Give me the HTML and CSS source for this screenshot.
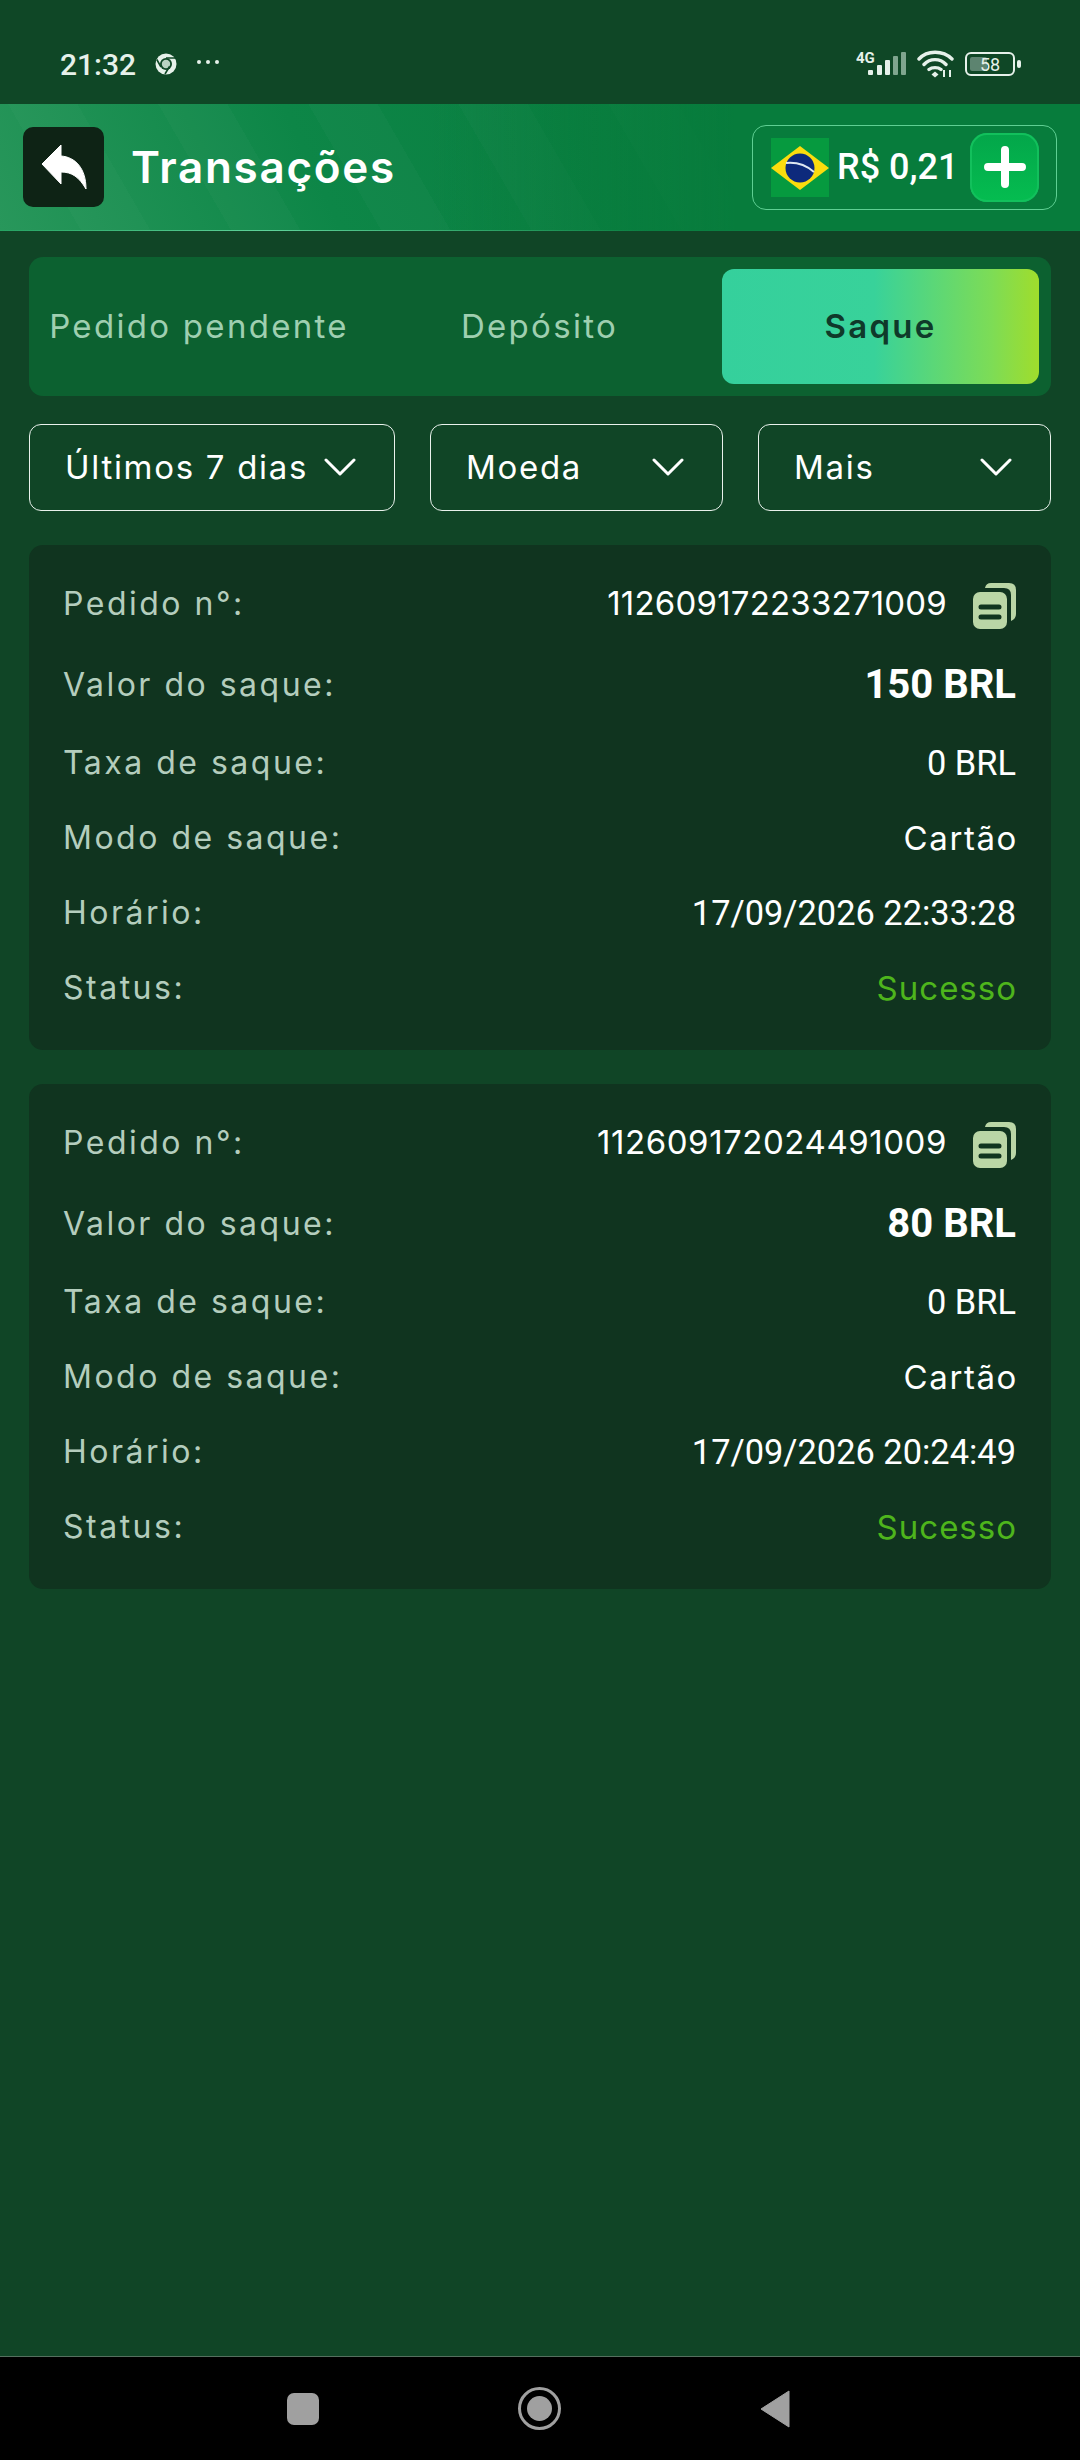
FILE: index.html
```html
<!DOCTYPE html>
<html lang="en">
<head>
    <meta charset="UTF-8">
    <meta name="viewport" content="width=device-width, initial-scale=1.0">
    <title>Transações</title>
    <link rel="stylesheet" href="styles.css">
</head>
<body>
    <div class="phone">
        <div class="statusbar">
            <div class="status-left">
                <span class="clock">21:32</span>
                <svg class="chrome" width="22" height="22" viewBox="0 0 22 22">
                    <circle cx="11" cy="11" r="10.500" fill="#e6f1ea"/>
                    <circle cx="11" cy="11" r="6" fill="#0f4726"/>
                    <circle cx="11" cy="11" r="4.200" fill="#b9d2c2"/>
                    <path d="M11 5h9M6 14L1.800 6.500M14.500 13.500L10 21" stroke="#0f4726" stroke-width="1.600" fill="none"/>
                </svg>
                <svg class="dots" width="24" height="6" viewBox="0 0 24 6">
                    <circle cx="3" cy="3" r="2" fill="#e6f1ea"/>
                    <circle cx="12" cy="3" r="2" fill="#e6f1ea"/>
                    <circle cx="21" cy="3" r="2" fill="#e6f1ea"/>
                </svg>
            </div>
            <div class="status-right">
                <svg width="50" height="28" viewBox="0 0 50 28">
                    <text x="0" y="13" class="net">4G</text>
                    <rect x="12" y="20" width="5" height="5" rx="1" fill="#e6f1ea"/>
                    <rect x="21" y="15" width="5" height="10" rx="1" fill="#e6f1ea"/>
                    <rect x="29" y="10" width="5" height="15" rx="1" fill="#e6f1ea"/>
                    <rect x="37" y="6" width="5" height="19" rx="1" fill="#7fa58e"/>
                    <rect x="45" y="2" width="5" height="23" rx="1" fill="#7fa58e"/>
                </svg>
                <svg class="wifi" width="37" height="28" viewBox="0 0 37 28">
                    <path d="M2 9C10 0 26 0 35 9M7 14.500C13 8 23 8 29 14.500M12 19.500C15 17 21 17 24 19.500" stroke="#e6f1ea" stroke-width="3.400" fill="none" stroke-linecap="round"/>
                    <path d="M18 21.500l3.500 3-3.500 3-3.500-3z" fill="#e6f1ea"/>
                    <path d="M27 20v7M33 20v7" stroke="#e6f1ea" stroke-width="2"/>
                </svg>
                <div class="battery">
                    <div class="battery-body"><span class="battery-fill"></span><span class="battery-num">58</span></div>
                    <span class="battery-tip"></span>
                </div>
            </div>
        </div>

        <div class="topbar">
            <div class="topbar-left">
                <div class="back-btn">
                    <svg width="46" height="46" viewBox="0 0 46 46">
                        <path d="M1 20L20 1V12C34 13 45 24 45 45C38 33 31 28 20 28V40Z" fill="#fff" stroke="#fff" stroke-linejoin="round"/>
                    </svg>
                </div>
                <span class="title">Transações</span>
            </div>
            <div class="balance">
                <svg class="flag" width="58" height="59" viewBox="0 0 58 59">
                    <rect width="58" height="59" fill="#069a3f"/>
                    <path d="M29 8L58 30L29 52L0 30Z" fill="#fbdc0e"/>
                    <circle cx="29" cy="30" r="14.500" fill="#0d2a7c"/>
                    <path d="M15 25C25 24 35 27 43 34" stroke="#dfe8f2" stroke-width="2" fill="none"/>
                </svg>
                <span class="amount">R$ 0,21</span>
                <div class="plus-btn">
                    <svg width="42" height="42" viewBox="0 0 42 42">
                        <path d="M21 4V38M4 21H38" stroke="#fff" stroke-width="8" stroke-linecap="round"/>
                    </svg>
                </div>
            </div>
        </div>

        <div class="content">
            <div class="tabs">
                <div class="tab tab-first">Pedido pendente</div>
                <div class="tab tab-mid">Depósito</div>
                <div class="tab active">Saque</div>
            </div>

            <div class="filters">
                <div class="filter filter-days"><span>Últimos 7 dias</span><svg class="chev" width="32" height="20" viewBox="0 0 32 20"><path d="M2 3L16 17L30 3" stroke="#fff" stroke-width="3" fill="none" stroke-linecap="round" stroke-linejoin="round"/></svg></div>
                <div class="filter filter-coin"><span>Moeda</span><svg class="chev" width="32" height="20" viewBox="0 0 32 20"><path d="M2 3L16 17L30 3" stroke="#fff" stroke-width="3" fill="none" stroke-linecap="round" stroke-linejoin="round"/></svg></div>
                <div class="filter filter-more"><span>Mais</span><svg class="chev" width="32" height="20" viewBox="0 0 32 20"><path d="M2 3L16 17L30 3" stroke="#fff" stroke-width="3" fill="none" stroke-linecap="round" stroke-linejoin="round"/></svg></div>
            </div>

            <div class="card">
                <div class="row row-order">
                    <span class="label">Pedido n°:</span>
                    <span class="value order order-a">112609172233271009
                        <svg class="copy" width="43" height="46" viewBox="0 0 43 46"><path d="M12 5Q13 0 18 0H36Q43 0 43 7V31Q43 36 38 38V12Q38 5 31 5Z" fill="#bad6a6"/><rect y="9" width="34" height="37" rx="7" fill="#bad6a6"/><path d="M8 24H26M8 34H26" stroke="#10341f" stroke-width="5" stroke-linecap="round"/></svg>
                    </span>
                </div>
                <div class="row row-amount"><span class="label">Valor do saque:</span><span class="value big">150 BRL</span></div>
                <div class="row"><span class="label">Taxa de saque:</span><span class="value">0 BRL</span></div>
                <div class="row"><span class="label">Modo de saque:</span><span class="value mode">Cartão</span></div>
                <div class="row"><span class="label">Horário:</span><span class="value">17/09/2026 22:33:28</span></div>
                <div class="row"><span class="label">Status:</span><span class="value ok">Sucesso</span></div>
            </div>

            <div class="card">
                <div class="row row-order">
                    <span class="label">Pedido n°:</span>
                    <span class="value order order-b">112609172024491009
                        <svg class="copy" width="43" height="46" viewBox="0 0 43 46"><path d="M12 5Q13 0 18 0H36Q43 0 43 7V31Q43 36 38 38V12Q38 5 31 5Z" fill="#bad6a6"/><rect y="9" width="34" height="37" rx="7" fill="#bad6a6"/><path d="M8 24H26M8 34H26" stroke="#10341f" stroke-width="5" stroke-linecap="round"/></svg>
                    </span>
                </div>
                <div class="row row-amount"><span class="label">Valor do saque:</span><span class="value big">80 BRL</span></div>
                <div class="row"><span class="label">Taxa de saque:</span><span class="value">0 BRL</span></div>
                <div class="row"><span class="label">Modo de saque:</span><span class="value mode">Cartão</span></div>
                <div class="row"><span class="label">Horário:</span><span class="value">17/09/2026 20:24:49</span></div>
                <div class="row"><span class="label">Status:</span><span class="value ok">Sucesso</span></div>
            </div>
        </div>

        <div class="navbar">
            <span class="nav-square"></span>
            <span class="nav-home"><span class="nav-home-dot"></span></span>
            <svg width="30" height="38" viewBox="0 0 30 38"><path d="M29 1V37L1 19Z" fill="#a0a0a0" stroke="#a0a0a0" stroke-width="1" stroke-linejoin="round"/></svg>
        </div>
    </div>
</body>
</html>
```

FILE: styles.css
```css
* {
    box-sizing: border-box;
}
body {
    margin: 0;
    background-color: #104526;
    font-family: 'Roboto', sans-serif;
    color: #fff;
}
.phone {
    width: 1080px;
    height: 2460px;
    display: flex;
    flex-direction: column;
}

/* status bar */
.statusbar {
    height: 104px;
    padding: 24px 59px 0 60px;
    background-color: #0f4726;
    display: flex;
    align-items: center;
    justify-content: space-between;
    color: #e6f1ea;
}
.status-left {
    display: flex;
    align-items: center;
}
.clock {
    font-size: 30px;
    font-weight: 500;
}
.chrome {
    margin-left: 19px;
}
.dots {
    margin-left: 19px;
    margin-bottom: 4px;
}
.status-right {
    display: flex;
    align-items: center;
    gap: 11px;
}
.net {
    font-family: 'Roboto', sans-serif;
    font-size: 15px;
    font-weight: 700;
    fill: #e6f1ea;
}
.battery {
    display: flex;
    align-items: center;
    gap: 2px;
}
.battery-body {
    width: 50px;
    height: 24px;
    border: 2px solid #e6f1ea;
    border-radius: 6px;
    position: relative;
    display: flex;
    align-items: center;
    justify-content: center;
}
.battery-fill {
    position: absolute;
    left: 3px;
    top: 3px;
    bottom: 3px;
    width: 17px;
    background-color: #5d8470;
    border-radius: 2px;
}
.battery-num {
    position: relative;
    font-size: 18px;
    color: #e6f1ea;
}
.battery-tip {
    width: 4px;
    height: 8px;
    background-color: #e6f1ea;
    border-radius: 2px;
}

/* top bar */
.topbar {
    height: 127px;
    padding: 0 23px;
    display: flex;
    align-items: center;
    justify-content: space-between;
    background:
        linear-gradient(90deg, rgba(7,124,60,0) 40%, #077c3c 68%),
        repeating-linear-gradient(60deg, rgba(255,255,255,0) 0 70px, rgba(255,255,255,0.02) 70px 130px),
        linear-gradient(65deg, #28975b 0%, #0d8647 30%, #0a7f41 55%, #067c3c 100%);
    border-bottom: 1px solid;
    border-image: linear-gradient(90deg, #25a362, #5fd39a 25%, #0a7f41 60%) 1;
}
.topbar-left {
    display: flex;
    align-items: center;
}
.back-btn {
    width: 81px;
    height: 80px;
    border-radius: 10px;
    background-color: #0e2315;
    display: flex;
    align-items: center;
    justify-content: center;
}
.title {
    margin-left: 27px;
    font-family: 'Inter', sans-serif;
    font-size: 44px;
    font-weight: 600;
    letter-spacing: 1.7px;
}
.balance {
    width: 305px;
    height: 85px;
    padding: 0 17px 0 18px;
    border: 1px solid #5fcf93;
    border-radius: 14px;
    display: flex;
    align-items: center;
}
.flag {
    flex-shrink: 0;
}
.amount {
    margin-left: 8px;
    font-size: 36px;
    font-weight: 500;
    white-space: nowrap;
}
.plus-btn {
    margin-left: auto;
    width: 69px;
    height: 69px;
    border-radius: 17px;
    background: linear-gradient(#03a64a, #05bd50);
    box-shadow: inset 0 0 0 2px #12c05c;
    display: flex;
    align-items: center;
    justify-content: center;
}

/* main */
.content {
    flex: 1;
    padding: 26px 29px 0;
    background-color: #104526;
}
.tabs {
    height: 139px;
    padding: 12px;
    background-color: #0c6130;
    border-radius: 14px;
    display: flex;
    align-items: center;
}
.tab {
    height: 115px;
    padding-bottom: 2px;
    display: flex;
    align-items: center;
    justify-content: center;
    font-family: 'Inter', sans-serif;
    font-size: 33px;
    letter-spacing: 2.3px;
    color: #9fcfb0;
    white-space: nowrap;
}
.tab-first {
    width: 316px;
}
.tab-mid {
    width: 365px;
}
.tab.active {
    width: 317px;
    color: #0f3a2a;
    font-weight: 600;
    border-radius: 12px;
    background: linear-gradient(90deg, #35d09c 0%, #38d29a 48%, #7ddc56 85%, #a0dd2c 100%);
}
.filters {
    margin-top: 28px;
    display: flex;
    justify-content: space-between;
}
.filter {
    height: 87px;
    border: 1px solid #e9f2ec;
    border-radius: 12px;
    padding: 0 38px 2px 35px;
    display: flex;
    align-items: center;
    justify-content: space-between;
    font-family: 'Inter', sans-serif;
    font-size: 33px;
    letter-spacing: 1.7px;
}
.filter-days {
    width: 366px;
}
.filter-coin {
    width: 293px;
}
.filter-more {
    width: 293px;
}

/* cards */
.card {
    margin-top: 34px;
    height: 505px;
    padding: 34px 35px 0 34px;
    background-color: #10341f;
    border-radius: 14px;
}
.row {
    height: 75px;
    display: flex;
    align-items: center;
    justify-content: space-between;
}
.row-order {
    height: 46px;
    padding-top: 2px;
    margin-bottom: 19px;
}
.row-amount {
    height: 81px;
}
.label {
    font-family: 'Inter', sans-serif;
    font-size: 32px;
    letter-spacing: 2.5px;
    color: #b4cdbd;
}
.value {
    display: flex;
    align-items: center;
    font-size: 34.400px;
    color: #fff;
}
.value.order {
    font-family: 'Inter', sans-serif;
    font-size: 33px;
}
.order-a {
    letter-spacing: 0.2px;
}
.order-b {
    letter-spacing: 0.55px;
}
.value.big {
    font-size: 40px;
    font-weight: 700;
}
.value.mode {
    font-family: 'Inter', sans-serif;
    font-size: 33px;
    letter-spacing: 1.6px;
    margin-right: -2px;
}
.value.ok {
    font-family: 'Inter', sans-serif;
    font-size: 33px;
    letter-spacing: 1px;
    margin-right: -1px;
    color: #4eb51c;
}
.copy {
    margin-left: 26px;
    margin-top: 6px;
}

/* nav bar */
.navbar {
    height: 104px;
    padding-right: 3px;
    background-color: #000;
    border-top: 1px solid #55705f;
    display: flex;
    align-items: center;
    justify-content: center;
}
.nav-square {
    width: 32px;
    height: 32px;
    border-radius: 7px;
    background-color: #a0a0a0;
    margin-right: 199px;
}
.nav-home {
    width: 43px;
    height: 43px;
    border: 3px solid #a0a0a0;
    border-radius: 50%;
    display: flex;
    align-items: center;
    justify-content: center;
    margin-right: 199px;
}
.nav-home-dot {
    width: 25px;
    height: 25px;
    border-radius: 50%;
    background-color: #a0a0a0;
}
```
